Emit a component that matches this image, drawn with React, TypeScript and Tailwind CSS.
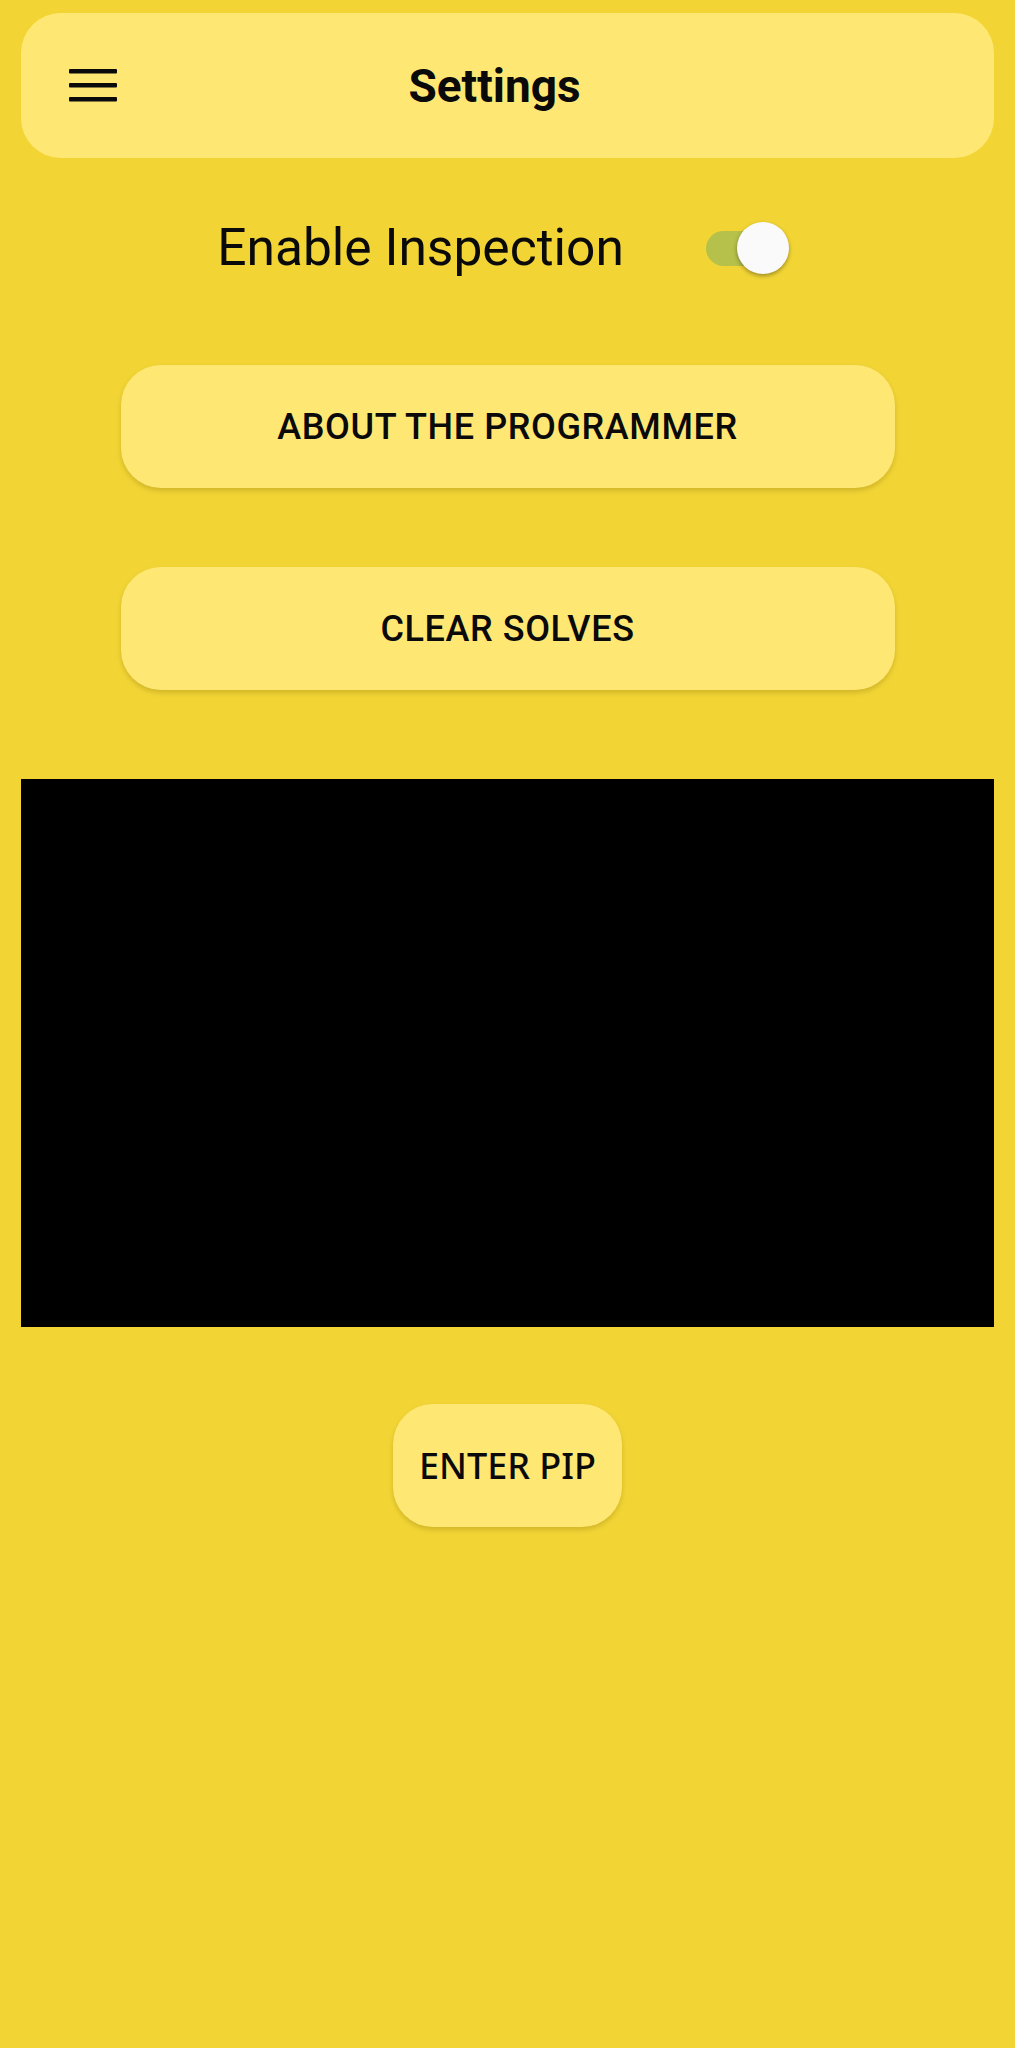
import React, { useState } from "react";

function MenuIcon() {
  return (
    <svg width="48" height="34" viewBox="0 0 48 34" fill="none">
      <rect x="0" y="0" width="48" height="4.5" rx="1" fill="#0a0a0a" />
      <rect x="0" y="14" width="48" height="4.5" rx="1" fill="#0a0a0a" />
      <rect x="0" y="28" width="48" height="4.5" rx="1" fill="#0a0a0a" />
    </svg>
  );
}

function Toggle({ on, onChange }: { on: boolean; onChange: () => void }) {
  return (
    <button
      onClick={onChange}
      className="relative w-[83px] h-[52px] flex items-center"
      aria-label="Enable Inspection"
    >
      <span
        className={
          "block w-[73px] h-[35px] rounded-full " +
          (on ? "bg-[#b5c14a]" : "bg-[#c9b84a]")
        }
      />
      <span
        className={
          "absolute top-0 w-[52px] h-[52px] rounded-full bg-[#fafafa] shadow-[0_2px_4px_rgba(0,0,0,0.35)] " +
          (on ? "left-[31px]" : "left-0")
        }
      />
    </button>
  );
}

function PillButton({
  label,
  wide,
  font,
}: {
  label: string;
  wide?: boolean;
  font?: string;
}) {
  return (
    <button
      className={
        "h-[123px] rounded-[40px] bg-[#ffe774] shadow-[0_3px_5px_rgba(120,90,0,0.25)] text-[#0a0a0a] font-medium text-[36px] " +
        (wide ? "w-[774px] tracking-[0.6px]" : "w-[229px]") +
        " " +
        (font ?? "font-['Roboto',sans-serif]")
      }
    >
      {label}
    </button>
  );
}

export default function App() {
  const [inspect, setInspect] = useState(true);

  return (
    <div className="min-h-[2048px] w-full bg-[#f2d535] font-['Roboto',sans-serif] text-[#0a0a0a] pt-[13px]">
      <header className="mx-[21px] h-[145px] rounded-[40px] bg-[#ffe774] flex items-center pl-[48px] pr-[122px]">
        <MenuIcon />
        <h1 className="flex-1 text-center text-[46px] font-bold leading-none">
          Settings
        </h1>
      </header>

      <div className="mt-[60px] flex items-center justify-center gap-[82px] h-[60px] pr-[9px]">
        <span className="text-[51.5px] leading-[60px]">Enable Inspection</span>
        <Toggle on={inspect} onChange={() => setInspect(!inspect)} />
      </div>

      <div className="flex flex-col items-center">
        <div className="mt-[87px]">
          <PillButton label="ABOUT THE PROGRAMMER" wide />
        </div>
        <div className="mt-[79px]">
          <PillButton label="CLEAR SOLVES" wide />
        </div>
      </div>

      <div className="mx-[21px] mt-[89px] h-[548px] bg-black" />

      <div className="mt-[77px] flex justify-center">
        <PillButton label="ENTER PIP" font="font-['Noto_Sans',sans-serif]" />
      </div>
    </div>
  );
}
